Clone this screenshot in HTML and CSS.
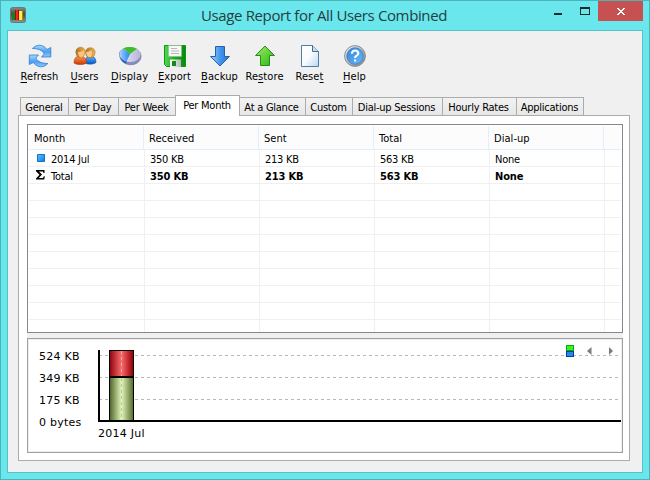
FILE: index.html
```html
<!DOCTYPE html>
<html lang="en">
<head>
<meta charset="utf-8">
<title>Usage Report for All Users Combined</title>
<link rel="stylesheet" href="styles.css">
</head>
<body>
<div class="window">
  <header class="titlebar">
    <svg class="app-icon" width="16" height="16" viewBox="0 0 16 16">
      <defs><linearGradient id="app" x2="0" y2="1"><stop stop-color="#888b86"/><stop offset=".45" stop-color="#454843"/><stop offset="1" stop-color="#92958f"/></linearGradient></defs>
      <rect x=".5" y=".5" width="15" height="15" rx="2" fill="url(#app)" stroke="#6c7b79"/>
      <g shape-rendering="crispEdges"><path d="M2 5h3v8H2z" fill="#078b18"/><path d="M5 3h4v10H5z" fill="#ff2020"/><path d="M5 3h1v10H5zM8 3h1v10H8z" fill="#a10812"/><path d="M9 4h3v9H9z" fill="#fff33b"/><path d="M12 4h1v9h-1z" fill="#aa8b00"/></g>
    </svg>
    <h1 class="title">Usage Report for All Users Combined</h1>
    <div class="controls">
      <svg width="93" height="20" viewBox="0 0 93 20" shape-rendering="crispEdges">
        <rect x="48" width="45" height="20" fill="#c75050"/>
        <path d="M4 12h8v2H4zM30 6h10v8H30zM31 8v5h8V8z" fill="#1c2c2d" fill-rule="evenodd"/>
        <path d="M67 7h2v1h1v1h2V8h1V7h2v1h-1v1h-1v1h-1v1h1v1h1v1h1v1h-2v-1h-1v-1h-2v1h-1v1h-2v-1h1v-1h1v-1h1v-1h-1V9h-1V8h-1z" fill="#fff"/>
      </svg>
    </div>
  </header>
  <main class="client">
    <nav class="toolbar">
      <a class="tool"><svg width="24" height="24" viewBox="0 0 24 24">
        <defs><linearGradient id="blue" x2="0" y2="1"><stop stop-color="#a6dcff"/><stop offset=".55" stop-color="#4c9ff2"/><stop offset="1" stop-color="#8bccff"/></linearGradient></defs>
        <g fill="url(#blue)" stroke="#236bc0" stroke-width=".7" stroke-linejoin="round"><path d="M4.500 4.500C9-.5 15.500.5 19 5.500l3.800-2v9.500h-9.300l2.700-3C14.500 6 9.500 4.500 4.500 4.500z"/><path d="M19.800 19.500c-4.500 5-11 4-14.500-1L1.300 20.500V11h9.200l-2.700 3c1.700 4 7 5.500 12 5.500z"/></g>
      </svg><span class="cap"><u>R</u>efresh</span></a>
      <a class="tool"><svg width="24" height="24" viewBox="0 0 24 24">
        <defs><linearGradient id="org" x2="0" y2="1"><stop stop-color="#ff9b4f"/><stop offset="1" stop-color="#c93708"/></linearGradient><linearGradient id="ub" x2="0" y2="1"><stop stop-color="#54b7ff"/><stop offset="1" stop-color="#0754c0"/></linearGradient><linearGradient id="hair"><stop stop-color="#b0701f"/><stop offset="1" stop-color="#eab54d"/></linearGradient></defs>
        <path d="M12 18c0-4 2-5.800 5.500-5.800 4 0 5.500 2.800 5.500 6.300-2 2-8 2-10 1z" fill="url(#ub)" stroke="#1752a4" stroke-width=".6"/>
        <path d="M12.500 7.500c.3-4.500 8-5.500 9.500-.5.600 3-1 6-3 6.500h-4c-2-1-2.500-3.500-2.500-6z" fill="url(#hair)" stroke="#a8752b" stroke-width=".5"/><path d="M13.200 8c2.500 0 3.800-1 4.800-2 1.300 1.500 1.300 5-.2 7h-2.300c-1.500-1-2.300-3-2.300-5z" fill="#ffc98b"/>
        <path d="M1 19c0-4.200 1.800-7 6-7s6.500 2.800 6.500 7c-3 2-9.500 2-12.500 0z" fill="url(#org)" stroke="#ad360b" stroke-width=".6"/>
        <path d="M2.800 8c-.3-5 7.500-7 9.200-1.500.6 3-1 6-3.500 7H6C4 13 3 10.500 2.800 8z" fill="url(#hair)" stroke="#a8752b" stroke-width=".5"/><path d="M5 8c3 .1 4.500-.7 5.800-2 1.400 2 .2 6.500-2.800 7.500C6 13 5 10.500 5 8z" fill="#ffc27c"/>
      </svg><span class="cap"><u>U</u>sers</span></a>
      <a class="tool"><svg width="24" height="24" viewBox="0 0 24 24">
        <defs><linearGradient id="pie"><stop stop-color="#ececff"/><stop offset="1" stop-color="#b4b4d6"/></linearGradient><linearGradient id="pb"><stop stop-color="#98ceff"/><stop offset="1" stop-color="#2384f0"/></linearGradient></defs>
        <path d="M1.500 10c0-9 21.500-8 21.500 2 0 12-21.500 12-21.500-2z" fill="#8b8cbb" stroke="#666792" stroke-width=".6"/>
        <ellipse cx="12.200" cy="10.500" rx="10.500" ry="7.500" fill="url(#pie)"/><path d="M12 10L5.500 4.500C0 8 1 15.500 8.500 17.500z" fill="url(#pb)"/><path d="M12 10L5.500 4.500C9 2.500 15 2.500 19 4.800z" fill="#3ebe28"/><path d="M2 12.500c1 4.500 4 6.500 6.500 7v-2C5 16.500 3 15 2 12.500z" fill="#1b61b9"/>
      </svg><span class="cap"><u>D</u>isplay</span></a>
      <a class="tool"><svg width="24" height="24" viewBox="0 0 24 24">
        <defs><linearGradient id="disk"><stop stop-color="#53d852"/><stop offset=".5" stop-color="#20a822"/><stop offset="1" stop-color="#078a0c"/></linearGradient><linearGradient id="met"><stop stop-color="#fff"/><stop offset="1" stop-color="#b5b7b7"/></linearGradient></defs>
        <path d="M1.500 1.500h21v21h-19l-2-2z" fill="url(#disk)" stroke="#119516"/><path d="M5.500 1.500h13v11h-13z" fill="#f8f8f8" stroke="#89bd88" stroke-width=".5"/><path d="M8 4.500h6M8 7h8M8 9.500h8" stroke="#b8b8b8"/><path d="M7 15.500h11V23H7z" fill="url(#met)"/><path d="M9 17h4v5H9z" fill="#138b1b"/>
      </svg><span class="cap"><u>E</u>xport</span></a>
      <a class="tool"><svg width="24" height="24" viewBox="0 0 24 24">
        <defs><linearGradient id="down" x2="1"><stop stop-color="#a0d5ff"/><stop offset=".5" stop-color="#4297ed"/><stop offset="1" stop-color="#236ed0"/></linearGradient></defs><path d="M7.500 2.500h9v10h5L12 22 2.500 12.500h5z" fill="url(#down)" stroke="#2761ae"/>
      </svg><span class="cap"><u>B</u>ackup</span></a>
      <a class="tool"><svg width="24" height="24" viewBox="0 0 24 24">
        <defs><linearGradient id="up" x2="1" y2="1"><stop stop-color="#a1ed64"/><stop offset="1" stop-color="#24b812"/></linearGradient></defs><path d="M12 2l9.500 9.500h-5v10h-9v-10h-5z" fill="url(#up)" stroke="#268b20"/>
      </svg><span class="cap">Re<u>s</u>tore</span></a>
      <a class="tool"><svg width="24" height="24" viewBox="0 0 24 24">
        <defs><linearGradient id="page" x2="1" y2="1"><stop stop-color="#fff"/><stop offset=".5" stop-color="#f7fbff"/><stop offset="1" stop-color="#b9d7f2"/></linearGradient></defs><path d="M3.500 1.500h11l6 6v15h-17z" fill="url(#page)" stroke="#527ba7"/><path d="M14.500 1.500v6h6" fill="#c4dff4" stroke="#466b92"/>
      </svg><span class="cap">Rese<u>t</u></span></a>
      <a class="tool"><svg width="24" height="24" viewBox="0 0 24 24">
        <defs><linearGradient id="ring" x2="1" y2="1"><stop stop-color="#fff"/><stop offset="1" stop-color="#777"/></linearGradient><linearGradient id="help" x2="1" y2="1"><stop stop-color="#3784d4"/><stop offset="1" stop-color="#65baff"/></linearGradient></defs><circle cx="12" cy="12" r="10.400" fill="url(#ring)" stroke="#858c96"/><circle cx="12" cy="12" r="8.300" fill="url(#help)" stroke="#3a78b9" stroke-width=".7"/><path d="M8.800 9.800c0-4.500 6.700-4 6.500-.3-.1 2.400-3.300 2-3.300 4.500" fill="none" stroke="#fff" stroke-width="2.100"/><path d="M11 15.500h2.200v2H11z" fill="#fff"/>
      </svg><span class="cap"><u>H</u>elp</span></a>
    </nav>
    <nav class="tabs">
      <span class="tab general">General</span><span class="tab day">Per Day</span><span class="tab week">Per Week</span><span class="tab month active">Per Month</span><span class="tab glance">At a Glance</span><span class="tab custom">Custom</span><span class="tab sessions">Dial-up Sessions</span><span class="tab rates">Hourly Rates</span><span class="tab apps">Applications</span>
    </nav>
    <section class="panel">
      <div class="list">
        <div class="row head"><span>Month</span><span>Received</span><span>Sent</span><span>Total</span><span>Dial-up</span><span></span></div>
        <div class="row data"><span><svg class="mark" width="9" height="9" viewBox="0 0 9 9"><defs><linearGradient id="dot" x2="1" y2="1"><stop stop-color="#62c1ff"/><stop offset="1" stop-color="#087ce8"/></linearGradient></defs><path d="M.5.500h7v7h-7z" fill="url(#dot)" stroke="#1672bd"/></svg><b class="plain">2014 Jul</b></span><span>350 KB</span><span>213 KB</span><span>563 KB</span><span>None</span><span></span></div>
        <div class="row data total"><span><svg class="mark" width="9" height="10" viewBox="0 0 9 10"><path d="M0 0h8.500v3h-1l-.6-1.500H3L6 4.500 2.800 8H7l.8-1.800h1L8.300 9.500H0V8.400L3.500 4.800 0 1.200z"/></svg><b class="plain">Total</b></span><span>350 KB</span><span>213 KB</span><span>563 KB</span><span>None</span><span></span></div>
        <div class="row data"><span></span><span></span><span></span><span></span><span></span><span></span></div>
        <div class="row data"><span></span><span></span><span></span><span></span><span></span><span></span></div>
        <div class="row data"><span></span><span></span><span></span><span></span><span></span><span></span></div>
        <div class="row data"><span></span><span></span><span></span><span></span><span></span><span></span></div>
        <div class="row data"><span></span><span></span><span></span><span></span><span></span><span></span></div>
        <div class="row data"><span></span><span></span><span></span><span></span><span></span><span></span></div>
        <div class="row data"><span></span><span></span><span></span><span></span><span></span><span></span></div>
        <div class="row data"><span></span><span></span><span></span><span></span><span></span><span></span></div>
        <div class="row data last"><span></span><span></span><span></span><span></span><span></span><span></span></div>
      </div>
      <div class="splitter"></div>
      <div class="graph">
        <div class="scale"><span>524 KB</span><span>349 KB</span><span>175 KB</span><span>0 bytes</span></div>
        <div class="plot">
          <svg width="523" height="83" viewBox="0 0 523 83" shape-rendering="crispEdges">
            <defs><linearGradient id="red"><stop stop-color="#8f080d"/><stop offset=".5" stop-color="#ff696c"/><stop offset="1" stop-color="#920006"/></linearGradient><linearGradient id="green"><stop stop-color="#53682d"/><stop offset=".5" stop-color="#e0f5b6"/><stop offset="1" stop-color="#596e31"/></linearGradient></defs>
            <path d="M1 15.500h520M1 37.500h520M1 59.500h520" stroke="#b8b8b8" stroke-dasharray="3 3"/>
            <path d="M11 10h25v71H11z"/><path d="M12 11h23v25H12z" fill="url(#red)"/><path d="M12 38h23v42H12z" fill="url(#green)"/><path d="M23.500 11v25M23.500 38v42" stroke="#bfc2b4" stroke-dasharray="3 3"/>
            <path d="M0 10h2v70h521v2H0z"/>
            <path d="M468 5h8v6h-8z" fill="#0aaa09"/><path d="M469 6h6v4h-6z" fill="#38f51b"/><path d="M468 11h8v6h-8z" fill="#003fa8"/><path d="M469 12h6v4h-6z" fill="#2789e6"/>
            <g shape-rendering="auto"><path d="M493.500 7v8l-4.500-4z" fill="#857a75"/><path d="M511 7v8l4-4z" fill="#857a75"/></g>
          </svg>
          <div class="date">2014 Jul</div>
        </div>
      </div>
    </section>
  </main>
</div>
</body>
</html>
```
FILE: styles.css
```css
* { box-sizing: border-box; }
body { margin: 0; color: #000; font: 11px/13px "DejaVu Sans Condensed", "DejaVu Sans", sans-serif; font-stretch: condensed; letter-spacing: -.25px; }
svg { display: block; }
.window { width: 650px; height: 480px; border: 1px solid #4cb4b9; background: #6ae7ec; padding: 0 6px; }
.titlebar { height: 29px; display: grid; grid-template-columns: 194px 1fr 93px; }
.app-icon { margin: 6px 0 0 3px; }
.title { margin: 4px 0 0; color: #253d40; font: 15px/20px "Open Sans", sans-serif; white-space: nowrap; letter-spacing: -.37px; }
.controls { width: 93px; }
.client { height: 443px; border: 1px solid #58c1c6; background: #f0f0f0; padding: 13px 11px 0 10px; }
.toolbar { display: flex; width: 360px; height: 51px; margin-left: -1px; }
.tool { width: 45px; display: flex; flex-direction: column; align-items: center; white-space: nowrap; }
.cap { margin-top: 2px; letter-spacing: .1px; }
.cap u { text-underline-offset: 2px; text-decoration-thickness: 1px; }
.tabs { display: flex; align-items: flex-end; height: 20px; padding-left: 2px; }
.tab { height: 18px; border: 1px solid #acacac; border-width: 1px 1px 0 0; background: linear-gradient(#f2f2f2, #e7e7e7); line-height: 19px; text-align: center; white-space: nowrap; padding-right: 1px; }
.general { width: 49px; border-left-width: 1px; }
.day { width: 50px; }
.week { width: 56px; border-right: 0; }
.active { position: relative; width: 65px; height: 21px; margin-bottom: -1px; background: #fff; border-left-width: 1px; }
.glance { width: 66px; padding-right: 2px; }
.custom { width: 47px; }
.sessions { width: 90px; padding-right: 2px; }
.rates { width: 74px; padding-right: 2px; }
.apps { width: 67px; }
.panel { width: 612px; height: 346px; border: 1px solid #acacac; background: #fff; padding: 8px; }
.list { width: 596px; height: 209px; border: 1px solid #828790; padding: 1px; overflow: hidden; }
.row { display: grid; grid-template-columns: 116px 115px 115px 115px 115px 1fr; grid-template-rows: 100%; }
.row span { border-right: 1px solid #f0f0f0; border-bottom: 1px solid #f0f0f0; padding-left: 5px; white-space: nowrap; }
.row span:last-child { border-right: 0; }
.head { height: 24px; line-height: 26px; background: #fcfcfc; grid-template-columns: 115px 115px 115px 115px 115px 1fr; }
.head span { border-color: #e3eefb; letter-spacing: .05px; }
.data { height: 17px; line-height: 19px; }
.data span:first-child { display: flex; padding-left: 8px; }
.mark { flex: none; width: 9px; margin: 4px 5px 0 0; }
.total .mark { margin: 3px 5px 0 -1px; }
.total .plain { margin-left: 1px; letter-spacing: -.2px; }
.plain { font-weight: 400; }
.total > span { font-weight: 700; letter-spacing: -.15px; }
.last { height: 12px; }
.last span { border-bottom: 0; }
.splitter { height: 5px; width: 596px; background: #f0f0f0; }
.graph { display: flex; width: 596px; height: 115px; border: 1px solid #a0a0a0; box-shadow: inset 0 0 0 1px #ededed; font-family: "DejaVu Sans", sans-serif; font-stretch: normal; letter-spacing: .25px; }
.scale { width: 70px; padding: 7px 0 0 11px; }
.scale span { display: block; height: 22px; line-height: 22px; }
.plot { width: 523px; padding-top: 1px; }
.date { height: 14px; line-height: 14px; margin-top: 4px; }
```
